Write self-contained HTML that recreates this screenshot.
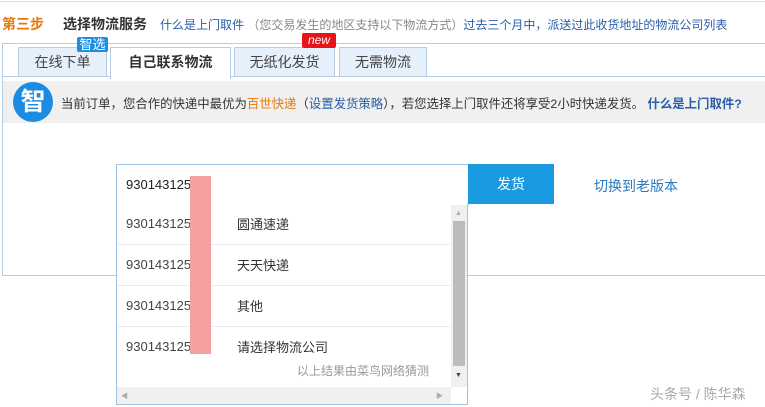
<!DOCTYPE html>
<html><head><meta charset="utf-8"><style>
*{margin:0;padding:0;box-sizing:border-box}
body{width:765px;height:407px;background:#fff;position:relative;overflow:hidden;font-family:"Liberation Sans","Noto Sans CJK SC",sans-serif;font-size:13px;color:#333}
.a{position:absolute;white-space:nowrap}
.tab{position:absolute;top:47px;height:30px;border:1px solid #b6cde4;border-bottom:none;background:#e6f0fb;text-align:center;line-height:29px;font-size:14px;color:#444}
</style></head><body>
<div class="a" style="left:0;top:1px;width:765px;height:1px;background:#ddd"></div>
<div class="a" style="left:2px;top:14px;font-size:12px"><span style="color:#e8780a;font-weight:bold;font-size:14px">第三步</span><span style="display:inline-block;width:19px"></span><b style="color:#333;font-size:14px">选择物流服务</b><span style="display:inline-block;width:13px"></span><span style="color:#2a5ea8">什么是上门取件</span> <span style="color:#888">（您交易发生的地区支持以下物流方式）</span><span style="color:#2a5ea8">过去三个月中，派送过此收货地址的物流公司列表</span></div>
<div class="a" style="left:2px;top:43px;width:770px;height:233px;border:1px solid #b6cde4"></div>
<div class="tab" style="left:18px;width:89px">在线下单</div>
<div class="tab" style="left:110px;width:121px;background:#fff;height:32px;font-weight:bold;color:#333">自己联系物流</div>
<div class="tab" style="left:234px;width:101px">无纸化发货</div>
<div class="tab" style="left:339px;width:88px">无需物流</div>
<div class="a" style="left:3px;top:76px;width:107px;height:1px;background:#b6cde4"></div>
<div class="a" style="left:231px;top:76px;width:540px;height:1px;background:#b6cde4"></div>
<div class="a" style="left:77px;top:37px;width:31px;height:15px;background:#1b8fe6;color:#fff;font-size:13px;line-height:15px;text-align:center;border-radius:2px">智选</div>
<div class="a" style="left:302px;top:33px;width:34px;height:15px;background:#e8141a;color:#fff;font-size:12px;font-style:italic;line-height:14px;text-align:center;border-radius:2px">new</div>
<div class="a" style="left:3px;top:81px;width:765px;height:42px;background:#f0f0f0"></div>
<div class="a" style="left:13px;top:82px;width:40px;height:40px;border-radius:50%;background:#1b8ce2;color:#fff;font-size:25px;font-weight:bold;line-height:40px;text-align:center">智</div>
<div class="a" style="left:61px;top:94px;font-size:12.4px;color:#333">当前订单，您合作的快递中最优为<span style="color:#e8780a">百世快递</span>（<span style="color:#2a5ea8">设置发货策略</span>），若您选择上门取件还将享受2小时快递发货。 <b style="color:#2a5ea8">什么是上门取件?</b></div>
<div class="a" style="left:116px;top:164px;width:353px;height:41px;border:1px solid #9fc3e4;background:#fff"></div>
<div class="a" style="left:468px;top:164px;width:86px;height:40px;background:#1a9ae0;color:#fff;font-size:14px;line-height:40px;text-align:center">发货</div>
<div class="a" style="left:594px;top:176px;font-size:14px;color:#2a7ac0">切换到老版本</div>
<div class="a" style="left:116px;top:204px;width:352px;height:201px;border:1px solid #9fc3e4;border-top:none;background:#fff"></div>
<div class="a" style="left:126px;top:177px;font-size:13px;color:#222">930143125</div>
<div class="a" style="left:117px;top:244px;width:335px;height:1px;background:#e6eef5"></div>
<div class="a" style="left:117px;top:285px;width:335px;height:1px;background:#e6eef5"></div>
<div class="a" style="left:117px;top:326px;width:335px;height:1px;background:#e6eef5"></div>
<div class="a" style="left:126px;top:216px;font-size:13px;color:#444">930143125</div>
<div class="a" style="left:126px;top:257px;font-size:13px;color:#444">930143125</div>
<div class="a" style="left:126px;top:298px;font-size:13px;color:#444">930143125</div>
<div class="a" style="left:126px;top:339px;font-size:13px;color:#444">930143125</div>
<div class="a" style="left:237px;top:214px;font-size:13px;color:#333">圆通速递</div>
<div class="a" style="left:237px;top:255px;font-size:13px;color:#333">天天快递</div>
<div class="a" style="left:237px;top:296px;font-size:13px;color:#333">其他</div>
<div class="a" style="left:237px;top:337px;font-size:13px;color:#333">请选择物流公司</div>
<div class="a" style="left:297px;top:362px;font-size:12px;color:#999">以上结果由菜鸟网络猜测</div>
<div class="a" style="left:190px;top:176px;width:21px;height:178px;background:#f4a0a0"></div>
<div class="a" style="left:451px;top:205px;width:16px;height:182px;background:#f0f0f0"></div>
<div class="a" style="left:453px;top:221px;width:12px;height:145px;background:#bcbcbc"></div>
<div class="a" style="left:455px;top:210px;font-size:7px;color:#aaa">▲</div>
<div class="a" style="left:455px;top:372px;font-size:7px;color:#444">▼</div>
<div class="a" style="left:117px;top:387px;width:334px;height:17px;background:#f0f0f0"></div>
<div class="a" style="left:121px;top:391px;font-size:7px;color:#aaa">◀</div>
<div class="a" style="left:436px;top:391px;font-size:7px;color:#aaa">▶</div>
<div class="a" style="left:650px;top:384px;font-size:14px;color:#aaa">头条号 / 陈华森</div>
</body></html>
